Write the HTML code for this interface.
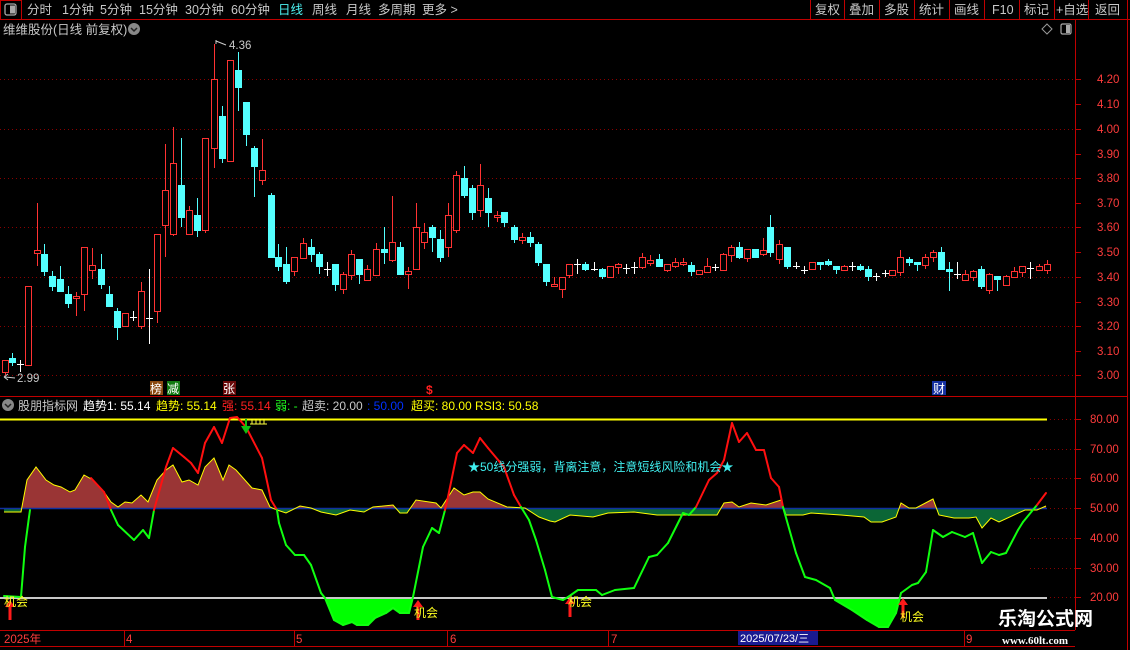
<!DOCTYPE html>
<html><head><meta charset="utf-8">
<style>
html,body{margin:0;padding:0;background:#000;width:1130px;height:650px;overflow:hidden;font-family:"Liberation Sans","Noto Sans CJK SC",sans-serif;}
#c{position:absolute;left:0;top:0}
</style></head><body>
<svg id="c" width="1130" height="650" xmlns="http://www.w3.org/2000/svg" font-family="Liberation Sans, Noto Sans CJK SC, sans-serif">
<defs>
<clipPath id="above"><rect x="0" y="400" width="1075" height="108.5"/></clipPath>
<clipPath id="below"><rect x="0" y="508.5" width="1075" height="120"/></clipPath>
<clipPath id="below20"><rect x="0" y="598" width="1075" height="32"/></clipPath>
</defs>
<rect x="0.5" y="0.5" width="21" height="19" fill="none" stroke="#c00000"/>
<rect x="5" y="4" width="11" height="11" rx="2" fill="none" stroke="#aaa" stroke-width="1.3"/>
<rect x="10" y="5.5" width="5" height="8" fill="#aaa"/>
<line x1="0" y1="19.5" x2="1130" y2="19.5" stroke="#c00000"/>
<g font-size="12.5" fill="#c8c8c8">
<text x="27" y="14">分时</text><text x="62" y="14">1分钟</text><text x="100" y="14">5分钟</text>
<text x="139" y="14">15分钟</text><text x="185" y="14">30分钟</text><text x="231" y="14">60分钟</text>
<text x="278" y="14" fill="#4cf0f0">日线</text><text x="312" y="14">周线</text><text x="346" y="14">月线</text>
<text x="378" y="14">多周期</text><text x="422" y="14">更多 &gt;</text>
<text x="815" y="14">复权</text><text x="849" y="14">叠加</text><text x="884" y="14">多股</text>
<text x="919" y="14">统计</text><text x="954" y="14">画线</text><text x="992" y="14">F10</text>
<text x="1024" y="14">标记</text><text x="1056" y="14">+自选</text><text x="1095" y="14">返回</text>
</g>
<g stroke="#c00000"><line x1="810.5" y1="0" x2="810.5" y2="19"/><line x1="844.5" y1="0" x2="844.5" y2="19"/><line x1="879.5" y1="0" x2="879.5" y2="19"/><line x1="914.5" y1="0" x2="914.5" y2="19"/><line x1="949.5" y1="0" x2="949.5" y2="19"/><line x1="984.5" y1="0" x2="984.5" y2="19"/><line x1="1019.5" y1="0" x2="1019.5" y2="19"/><line x1="1054.5" y1="0" x2="1054.5" y2="19"/><line x1="1088.5" y1="0" x2="1088.5" y2="19"/><line x1="1127.5" y1="0" x2="1127.5" y2="650"/></g>
<text x="3" y="34" font-size="12.5" fill="#c8c8c8">维维股份(日线 前复权)</text>
<circle cx="134" cy="29" r="6" fill="#888"/><path d="M131 28 L134 31 L137 28" stroke="#222" stroke-width="1.5" fill="none"/>
<path d="M1047 24 L1052 29 L1047 34 L1042 29 Z" fill="none" stroke="#999"/>
<rect x="1061" y="24" width="10" height="10" rx="1.5" fill="none" stroke="#aaa" stroke-width="1.2"/><rect x="1066" y="25" width="4" height="8" fill="#aaa"/>
<line x1="1075.5" y1="20" x2="1075.5" y2="630" stroke="#c00000"/>
<line x1="0" y1="396.5" x2="1127" y2="396.5" stroke="#c00000"/>
<g id="grid"></g>
<g id="candles"></g>
<g font-size="11.5" fill="#ff3c3c" id="axlabels"></g>
<g fill="#c8c8c8" font-size="11.5">
<text x="229" y="49">4.36</text><path d="M216 40 L216 44 M216 41 L226 45" stroke="#ccc" fill="none"/>
<text x="17" y="382">2.99</text><path d="M5 377 L15 378" stroke="#ccc"/><path d="M4 377 L8 374 M4 377 L8 380" stroke="#ccc" fill="none"/>
</g>
<rect x="150" y="381" width="13" height="14" fill="#8b4a10"/><text x="150" y="393" font-size="12" fill="#fff">榜</text>
<rect x="167" y="381" width="13" height="14" fill="#107a10"/><text x="167" y="393" font-size="12" fill="#fff">减</text>
<rect x="223" y="381" width="13" height="14" fill="#6a0a0a"/><text x="223" y="393" font-size="12" fill="#fff">张</text>
<text x="426" y="394" font-size="12" fill="#ff2020" font-weight="bold">$</text>
<rect x="932" y="381" width="14" height="14" fill="#1530a0"/><text x="933" y="393" font-size="12" fill="#fff">财</text>
<circle cx="8" cy="405" r="6" fill="#888"/><path d="M5 404 L8 407 L11 404" stroke="#222" stroke-width="1.5" fill="none"/>
<g font-size="12" >
<text x="18" y="410" fill="#c8c8c8">股朋指标网</text>
<text x="83" y="410" fill="#fff">趋势1: 55.14</text>
<text x="156" y="410" fill="#ffff00">趋势: 55.14</text>
<text x="222" y="410" fill="#ff2020">强: 55.14</text>
<text x="275" y="410" fill="#20ff20">弱: -</text>
<text x="302" y="410" fill="#c8c8c8">超卖: 20.00</text>
<text x="367" y="410" fill="#0030ff">: 50.00</text>
<text x="411" y="410" fill="#ffff00">超买: 80.00  RSI3: 50.58</text>
</g>
<g id="ind"></g>
<line x1="0" y1="630.5" x2="1075" y2="630.5" stroke="#c00000"/>
<line x1="0" y1="646.5" x2="1075" y2="646.5" stroke="#c00000"/>
<g stroke="#c00000"><line x1="124.5" y1="630" x2="124.5" y2="646"/><line x1="294.5" y1="630" x2="294.5" y2="646"/><line x1="447.5" y1="630" x2="447.5" y2="646"/><line x1="608.5" y1="630" x2="608.5" y2="646"/><line x1="964.5" y1="630" x2="964.5" y2="646"/></g>
<g font-size="11.5" fill="#ff3c3c">
<text x="4" y="643">2025年</text><text x="126" y="643">4</text><text x="296" y="643">5</text><text x="450" y="643">6</text><text x="611" y="643">7</text><text x="966" y="643">9</text>
</g>
<rect x="738" y="631" width="80" height="14" fill="#1a1a90"/>
<text x="740" y="642" font-size="11" fill="#fff">2025/07/23/三</text>
<text x="998" y="625" font-size="19" font-weight="bold" fill="#fff">乐淘公式网</text>
<text x="1002" y="644" font-size="11" font-weight="bold" fill="#fff" font-family="Liberation Serif, serif">www.60lt.com</text>
</svg>
<script>
var NS="http://www.w3.org/2000/svg";
function el(p,t,a){var e=document.createElementNS(NS,t);for(var k in a)e.setAttribute(k,a[k]);p.appendChild(e);return e;}
var g=document.getElementById('grid');
[79,129,178,227,277,326,375].forEach(function(y){el(g,'line',{x1:0,y1:y+0.5,x2:1075,y2:y+0.5,stroke:'#8a0000','stroke-dasharray':'1 3'});});
[419,449,478,508,538,568,597].forEach(function(y){el(g,'line',{x1:1030,y1:y+0.5,x2:1075,y2:y+0.5,stroke:'#8a0000','stroke-dasharray':'1 3'});});
var ax=document.getElementById('axlabels');
var pl=[["4.20",79],["4.10",104],["4.00",129],["3.90",154],["3.80",178],["3.70",203],["3.60",227],["3.50",252],["3.40",277],["3.30",302],["3.20",326],["3.10",351],["3.00",375]];
pl.forEach(function(p){var t=el(ax,'text',{x:1097,y:p[1]+4});t.textContent=p[0];el(g,'line',{x1:1075,y1:p[1]+0.5,x2:1081,y2:p[1]+0.5,stroke:'#c00000'});});
[["80.00",419],["70.00",449],["60.00",478],["50.00",508],["40.00",538],["30.00",568],["20.00",597]].forEach(function(p){var t=el(ax,'text',{x:1090,y:p[1]+4});t.textContent=p[0];el(g,'line',{x1:1075,y1:p[1]+0.5,x2:1081,y2:p[1]+0.5,stroke:'#c00000'});});
var C=[
['r',4.5,360,372,360,375],['c',12,358,362,353,366],['w',20,364,364,360,372],['r',28,286,365,286,365],['r',37,250,253,203,266],['c',44,254,271,244,276],['c',52,276,286,271,291],['c',60,279,291,266,291],['c',68,294,303,286,308],['r',76,296,298,292,316],
['r',84,247,294,247,311],['r',92,265,270,248,279],['c',101,269,284,254,289],['c',109,294,306,286,306],['c',117,311,327,308,340],['r',125,313,326,313,327],['w',133,317,317,311,321],['r',141,291,326,282,329],['w',149,318,318,269,344],['r',157,234,311,234,323],
['r',165,190,225,144,257],['r',173,163,234,127,236],['c',181,185,217,138,227],['r',189,210,234,206,234],['c',197,215,230,198,237],['r',205,138,230,138,233],['r',214,79,148,44,168],['c',222,116,158,106,163],['r',230,60,161,60,162],['c',238,70,87,52,111],
['c',246,102,134,102,146],['c',254,148,166,146,197],['r',262,170,180,139,185],['c',271,195,257,193,257],['c',278,257,266,244,271],['c',286,264,281,247,284],['r',294,257,271,257,276],['r',303,243,258,238,258],['c',311,247,254,239,262],['c',319,254,266,252,274],
['w',327,269,269,262,276],['c',335,264,284,264,291],['r',343,274,289,272,294],['r',351,254,275,250,280],['c',359,259,274,259,284],['r',367,269,280,265,280],['r',376,249,275,243,275],['c',384,249,252,227,264],['r',392,242,260,196,262],['c',400,247,274,242,274],
['r',408,271,274,267,289],['r',416,227,269,203,269],['r',424,232,242,223,249],['c',432,227,237,225,252],['c',440,239,257,230,262],['r',448,215,247,203,257],['r',456,175,230,171,233],['c',464,178,195,166,198],['c',472,188,212,185,220],['r',480,185,210,164,217],
['c',488,198,212,188,227],['r',497,215,217,211,222],['c',504,212,222,212,227],['c',514,227,239,225,243],['r',522,237,240,233,244],['c',530,237,242,232,247],['c',538,244,262,242,266],['c',546,264,281,264,286],['r',554,284,286,277,287],['r',562,277,289,277,298],
['r',569,264,275,264,278],['w',577,264,264,259,274],['c',585,264,269,262,271],['w',594,269,269,262,271],['c',602,269,276,268,279],['r',610,266,277,266,277],['r',618,264,267,263,274],['w',626,268,268,264,274],['w',634,267,267,262,274],['r',642,257,267,253,269],
['r',650,260,263,255,266],['c',659,259,266,254,266],['r',667,264,270,264,272],['r',675,262,266,258,268],['r',683,262,264,258,266],['c',691,265,271,262,276],['r',699,270,274,270,274],['r',707,266,272,258,272],['w',715,267,267,264,271],['r',723,254,270,253,271],
['r',731,247,255,245,262],['c',739,247,257,242,259],['r',747,249,258,249,262],['c',755,249,257,249,257],['r',763,250,254,238,256],['c',770,227,252,215,257],['r',779,244,259,240,264],['c',787,247,266,247,269],['w',796,266,266,262,269],['w',804,270,270,266,274],
['r',812,262,269,262,269],['c',820,262,264,262,270],['c',828,261,264,259,266],['c',836,266,269,266,274],['r',844,266,270,265,271],['w',852,266,266,262,271],['c',860,266,269,264,271],['c',868,269,276,266,281],['w',876,276,276,273,281],['w',885,273,273,270,277],
['r',892,270,275,270,275],['r',900,257,272,250,276],['c',909,259,262,257,266],['c',917,262,264,262,271],['r',925,257,265,254,269],['r',933,252,257,250,262],['c',941,252,269,247,269],['c',949,269,271,262,291],['w',957,274,274,262,279],['r',965,274,280,270,281],
['r',973,271,277,270,281],['c',981,269,286,266,289],['r',989,274,290,273,294],['c',997,276,279,276,291],['r',1006,276,285,275,285],['r',1014,271,277,267,277],['r',1022,266,272,266,277],['w',1030,268,268,262,279],['r',1039,266,270,264,271],['r',1047,264,270,260,274]];
var cg=document.getElementById('candles');
C.forEach(function(c){var x=Math.round(c[1]);var col=c[0]=='r'?'#ff3232':c[0]=='c'?'#54ffff':'#ffffff';
 el(cg,'line',{x1:x+0.5,y1:c[4],x2:x+0.5,y2:c[5],stroke:col});
 if(c[0]=='w'){el(cg,'line',{x1:x-3,y1:c[2]+0.5,x2:x+4,y2:c[2]+0.5,stroke:col});return;}
 var h=Math.max(c[3]-c[2],1);
 if(c[0]=='r'){el(cg,'rect',{x:x-2.5,y:c[2]+0.5,width:6,height:h,fill:'#000',stroke:col});}
 else el(cg,'rect',{x:x-3,y:c[2],width:7,height:h+1,fill:col});});
var ig=document.getElementById('ind');
var Y=[[4,512],[21,512],[27,480],[36,467],[46,480],[54,485],[61,487],[70,492],[75,490],[84,475],[93,480],[104,492],[111,502],[118,507],[125,502],[132,503],[141,495],[148,502],[157,480],[166,470],[173,465],[182,482],[189,480],[198,485],[205,467],[214,458],[223,480],[229,465],[236,470],[252,488],[262,490],[270,507],[277,510],[286,513],[300,506],[311,508],[321,512],[336,515],[350,510],[364,512],[373,507],[393,505],[400,513],[407,513],[416,500],[436,503],[441,508],[454,488],[464,495],[473,492],[480,492],[488,499],[507,507],[525,508],[539,517],[550,521],[555,522],[570,515],[593,517],[608,513],[634,512],[657,515],[690,515],[717,515],[724,503],[732,502],[739,507],[751,503],[766,505],[781,500],[786,515],[803,515],[811,513],[841,515],[864,517],[871,522],[882,522],[896,517],[901,503],[909,508],[916,508],[933,499],[939,515],[954,518],[969,518],[976,517],[982,528],[991,518],[999,522],[1014,515],[1025,510],[1037,510],[1046,506]];
function pts(a){return a.map(function(p){return p[0]+','+p[1]}).join(' ');}
var poly=pts(Y)+' 1046,508.5 4,508.5';
el(ig,'polygon',{points:poly,fill:'#9a3535','clip-path':'url(#above)'});
el(ig,'polygon',{points:poly,fill:'#0b6636','clip-path':'url(#below)'});
var T=[[4,596],[21,597],[25,547],[29,517],[30,510],[36,467],[46,480],[54,485],[61,487],[70,492],[75,490],[84,475],[91,478],[104,492],[111,510],[118,525],[134,540],[143,530],[149,538],[154,510],[166,467],[173,448],[184,457],[191,463],[198,473],[205,443],[214,427],[222,443],[230,418],[237,417],[246,427],[262,458],[271,500],[277,510],[279,523],[286,545],[295,555],[304,555],[311,565],[321,593],[325,598],[334,620],[343,625],[352,622],[357,625],[368,625],[375,618],[386,613],[393,608],[400,613],[409,613],[413,597],[423,547],[432,528],[439,533],[445,510],[448,497],[457,453],[464,445],[473,453],[480,438],[488,448],[504,467],[514,495],[521,507],[529,520],[536,540],[545,570],[552,597],[563,600],[568,597],[578,590],[596,590],[602,595],[615,590],[634,588],[649,557],[657,555],[668,543],[683,513],[689,515],[696,507],[709,480],[717,473],[724,460],[732,423],[739,442],[747,433],[756,450],[764,450],[771,478],[779,487],[783,507],[796,553],[805,577],[816,580],[830,588],[835,600],[852,610],[867,620],[879,627],[888,627],[896,613],[901,593],[912,585],[918,583],[926,572],[933,530],[943,537],[952,532],[965,537],[973,533],[982,563],[991,552],[999,555],[1006,553],[1018,530],[1023,522],[1037,505],[1046,493]];
el(ig,'polygon',{points:pts(T)+' 1046,598 4,598',fill:'#00ff00','clip-path':'url(#below20)'});
el(ig,'line',{x1:0,y1:419.5,x2:1047,y2:419.5,stroke:'#ffff00','stroke-width':2});
el(ig,'line',{x1:0,y1:598,x2:1047,y2:598,stroke:'#c8c8c8','stroke-width':2});
el(ig,'line',{x1:0,y1:508.5,x2:1047,y2:508.5,stroke:'#1030a0','stroke-width':1.5});
el(ig,'polyline',{points:pts(Y),fill:'none',stroke:'#ffff00','stroke-width':1});
var ys={};Y.forEach(function(p){ys[p[0]+','+p[1]]=1;});
for(var i=0;i<T.length-1;i++){var a=T[i],b=T[i+1];
 if(ys[a[0]+','+a[1]]&&ys[b[0]+','+b[1]])continue;
 if(a[0]>=30&&b[0]<=91)continue;
 var col=((a[1]+b[1])/2<508)?'#ff1010':'#10ff10';
 el(ig,'line',{x1:a[0],y1:a[1],x2:b[0],y2:b[1],stroke:col,'stroke-width':2,'stroke-linecap':'round'});}
function up(x,y){el(ig,'path',{d:'M'+x+' '+y+' l-5 7 h3.5 v13 h3 v-13 h3.5 z',fill:'#ff1a1a'});}
up(10,600);up(418,600);up(570,597);up(903,598);
el(ig,'path',{d:'M245 419 v7 h-4 l5 8 l5 -8 h-4 v-7 z',fill:'#10c010'});
var tx=[[4,606],[414,617],[568,606],[900,621]];
tx.forEach(function(p){var t=el(ig,'text',{x:p[0],y:p[1],'font-size':12,fill:'#ffff20'});t.textContent='机会';});
var t=el(ig,'text',{x:468,y:471,'font-size':12,fill:'#40f0f0'});t.textContent='★50线分强弱，背离注意，注意短线风险和机会★';
el(ig,'path',{d:'M250 424 h17 M252 419 v5 M256 419 v5 M260 419 v5 M264 419 v5',stroke:'#ffff40',fill:'none'});
</script>
</body></html>
